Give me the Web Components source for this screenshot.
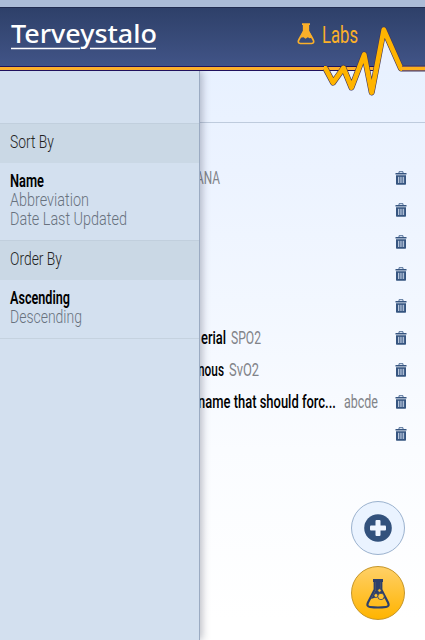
<!DOCTYPE html>
<html lang="en"><head><meta charset="utf-8"><title>Terveystalo Labs</title>
<style>html,body{margin:0;height:100%;overflow:hidden}body{font-family:Roboto,"Liberation Sans",sans-serif;color:#000}</style></head>
<body>
<labs-app></labs-app>
<script>
// One line of condensed text, fitted to a given width.
class NarrowText extends HTMLElement {
  connectedCallback() {
    const g = (n, d) => this.getAttribute(n) || d;
    const size = +g('size', 18), h = +g('line', 19), w = +g('width', 50);
    this.attachShadow({mode:'open'}).innerHTML = `<style>
      :host{display:block;flex:none;width:${w}px;height:${h}px}
      svg{display:block;overflow:visible}
      text{font-family:${g('face','Roboto')},"Liberation Sans",sans-serif;font-size:${size}px;font-weight:${g('weight','400')};fill:currentColor}
      </style><svg width="${w}" height="${h}"><text x="0" y="${g('base', 15)}"></text></svg>`;
    const t = this.shadowRoot.querySelector('text');
    t.textContent = g('text','');
    const natural = t.getComputedTextLength();
    if (natural > 0) t.setAttribute('transform', `scale(${w / natural} 1)`);
  }
}
customElements.define('narrow-text', NarrowText);

const icons = {
  trash: `<svg width="12" height="14" viewBox="0 0 12 14"><path d="M4 2.200V.7h4v1.500" fill="none" stroke="#526f98" stroke-width="1"/><path d="M.5 2h11v1.400H.5zM1 4.300h10V13q0 .7-.7.7H1.700Q1 13.700 1 13z" fill="#365580"/><path d="M3.500 5.800v6.200M5.200 5.800v6.200M6.900 5.800v6.200M8.600 5.800v6.200" stroke="#c6d4e7" stroke-width=".9"/></svg>`,
  flask: `<svg width="18" height="22" viewBox="0 0 18 22"><path d="M5 1.200h8M6.700 2v6.200L2 16.500q-2 3.500 1.500 4h11q3.500-.5 1.500-4L11.300 8.200V2" fill="none" stroke="#fbb029" stroke-width="1.700"/><path d="M6 1h6v7l3.600 6.500-3 .7-1.800-1-2.300 1.600-2-1.600-3.600.5L6 8z" fill="#fbb029"/></svg>`,
  plus: `<svg width="28" height="28" viewBox="0 0 28 28"><circle cx="14" cy="14" r="13.800" fill="#32517c"/><rect x="6" y="11.500" width="16" height="5" rx="1" fill="#eff5ff"/><rect x="11.500" y="6" width="5" height="16" rx="1" fill="#eff5ff"/></svg>`,
  beaker: `<svg width="24" height="31" viewBox="0 0 24 31"><path d="M7 1h10v3H7z" fill="#2c3f6b"/><path d="M8.700 3.500v8L2 24.500Q.2 28.500 4 29q8 1 16 0 3.800-.5 2-4.500l-6.700-13v-8" fill="none" stroke="#2c3f6b" stroke-width="2.200"/><path d="M9.600 4h4.800v7.500l5 8.500q-2 .8-3.700.7l-4.700-1.700-6 2L9.600 12z" fill="#2c3f6b"/><g fill="#ffc331" stroke="#2c3f6b" stroke-width=".8"><circle cx="13.500" cy="12.500" r="1.700"/><circle cx="10" cy="17.500" r="2"/><circle cx="15" cy="18.500" r="3.200"/></g></svg>`
};
class UiIcon extends HTMLElement {
  connectedCallback(){this.attachShadow({mode:'open'}).innerHTML=`<style>:host{display:block;flex:none}svg{display:block}</style>${icons[this.getAttribute('name')]}`}
}
customElements.define('ui-icon', UiIcon);

class AppHeader extends HTMLElement {
  constructor(){super();this.attachShadow({mode:'open'}).innerHTML=`<style>
    :host{display:flex;position:relative;box-sizing:border-box;height:71px;padding:16px 0 0 11px;border-top:7px solid #abbcd7;background:linear-gradient(#202c50 0 1px,#2e4069 1px,#415487 59px,#20125e 59px 60px,#fdb02b 60px 63px,#20125e 63px);z-index:4}
    .brand{position:relative;width:146px;color:#fff}
    .rule{position:absolute;left:0;top:24px;display:block}
    .title{display:flex;gap:7px;margin-left:140px;color:#fbb029}
    .pulse{position:absolute;left:0;top:-7px;pointer-events:none}
  </style><div class="brand"><narrow-text text="Terveystalo" face="'Noto Sans'" weight="500" size="26" width="146" line="30" base="20"></narrow-text>
  <svg class="rule" width="146" height="4"><path d="M0 1.500h69M79 1.500h66" stroke="#fff" stroke-width="1.400"/></svg></div>
  <svg class="pulse" width="425" height="110"><path d="M325 71L333 84 343.500 68 351.500 88 364 54 371.500 93 384 30 401 71z" fill="#e9f1ff"/><path d="M401 66h24v5h-24z" fill="#e9f1ff"/>
  <g fill="none" stroke-linejoin="round"><path d="M324 68.500h1.500L333 82.700 343.500 68 351.500 87.500 364.200 54.500 371.700 92.500 383.800 29.700 401 68.500h24" stroke="#40345c" stroke-width="6"/><path d="M324 68.500h1.500L333 82.700 343.500 68 351.500 87.500 364.200 54.500 371.700 92.500 383.800 29.700 401 68.500h24" stroke="#ffb400" stroke-width="4.800"/><path d="M402 68.500h23" stroke="#7c5a5c" stroke-width="5"/><path d="M401 68.500h24" stroke="#ffb018" stroke-width="3"/></g></svg>
  <div class="title"><ui-icon name="flask"></ui-icon><narrow-text text="Labs" size="24" width="36" line="28" base="20"></narrow-text></div>`}
}
customElements.define('app-header', AppHeader);

class OptionGroup extends HTMLElement {
  constructor(){super();this.attachShadow({mode:'open'}).innerHTML=`<style>
    :host{display:block}.head{box-sizing:border-box;height:40px;padding:10px 10px 0;background:#cad8e5;border-top:1px solid #c1cfdd;color:#222}
    .options{padding:9px 10px 11px;color:#68727e}</style><div class="head"><slot name="head"></slot></div><div class="options"><slot></slot></div>`}
}
customElements.define('option-group', OptionGroup);

class SidePanel extends HTMLElement {
  constructor(){super();this.attachShadow({mode:'open'}).innerHTML=`<style>
    :host{display:block;box-sizing:border-box;width:200px;padding-top:52px;border-right:1px solid #9babc2;background:#d3e0ef;box-shadow:2px 0 8px rgba(35,40,65,.32);z-index:3}
    .end{border-top:1px solid #c5d2df}.on{color:#000}</style>
    <option-group><narrow-text slot="head" text="Sort By" weight="300" width="44" base="14"></narrow-text>
    <narrow-text class="on" text="Name" weight="600" width="34"></narrow-text><narrow-text text="Abbreviation" weight="300" width="79"></narrow-text><narrow-text text="Date Last Updated" weight="300" width="117"></narrow-text></option-group>
    <option-group><narrow-text slot="head" text="Order By" weight="300" width="52" base="14"></narrow-text>
    <narrow-text class="on" text="Ascending" weight="600" width="60"></narrow-text><narrow-text text="Descending" weight="300" width="72"></narrow-text></option-group><div class="end"></div>`}
}
customElements.define('side-panel', SidePanel);

class LabRow extends HTMLElement {
  connectedCallback(){
    this.attachShadow({mode:'open'}).innerHTML=`<style>:host{display:flex;height:32px;align-items:flex-start;justify-content:space-between;padding:0 18px 0 0}.label{display:flex;color:#000}.label slot{display:flex}</style><div class="label"><slot></slot></div><ui-icon name="trash"></ui-icon>`}
}
customElements.define('lab-row', LabRow);

class RoundButton extends HTMLElement {
  constructor(){super();this.attachShadow({mode:'open'}).innerHTML=`<style>:host{box-sizing:border-box;display:flex;width:54px;height:54px;border-radius:50%;border:1px solid #9bb2ce;background:#eaf3ff;align-items:center;justify-content:center}:host([gold]){border-color:#c59527;background:linear-gradient(#ffd067,#ffb400)}</style><slot></slot>`}
}
customElements.define('round-button', RoundButton);

class LabsApp extends HTMLElement {
  constructor(){super();this.attachShadow({mode:'open'}).innerHTML=`<style>
    :host{display:grid;grid-template-rows:71px 569px;height:640px;background:linear-gradient(#e8f1ff 70px,#ecf3ff 170px,#f2f7ff 300px,#fafcff 450px,#fff 620px)}
    .body{display:grid;grid-template-columns:200px 225px;min-height:0}
    main{position:relative;min-width:0}.bar{height:51px;border-bottom:1px solid #becbdd}
    .rows{padding-top:48px}.g{color:#818388}
    .actions{position:absolute;right:20px;bottom:20px;display:grid;gap:11px}
  </style><app-header></app-header><div class="body"><side-panel></side-panel><main><div class="bar"></div><div class="rows">
    <lab-row><narrow-text class="g" text="ANA" width="24" base="13" style="margin-left:-4px"></narrow-text></lab-row>
    <lab-row></lab-row><lab-row></lab-row><lab-row></lab-row><lab-row></lab-row>
    <lab-row><narrow-text text="erial" weight="500" width="25" base="13" style="margin-left:1px"></narrow-text><narrow-text class="g" text="SPO2" width="30" base="13" style="margin-left:5px"></narrow-text></lab-row>
    <lab-row><narrow-text text="nous" weight="500" width="26" base="13" style="margin-left:-2px"></narrow-text><narrow-text class="g" text="SvO2" width="30" base="13" style="margin-left:5px"></narrow-text></lab-row>
    <lab-row><narrow-text text="name that should forc..." weight="500" width="138" base="13" style="margin-left:-2px"></narrow-text><narrow-text class="g" text="abcde" width="34" base="13" style="margin-left:8px"></narrow-text></lab-row>
    <lab-row></lab-row></div><div class="actions"><round-button><ui-icon name="plus"></ui-icon></round-button><round-button gold><ui-icon name="beaker"></ui-icon></round-button></div></main></div>`}
}
customElements.define('labs-app', LabsApp);
</script></body></html>
